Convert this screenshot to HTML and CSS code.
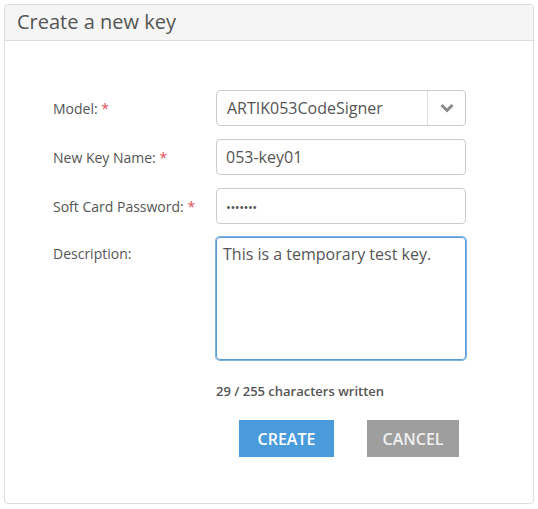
FILE: index.html
```html
<!DOCTYPE html>
<html>
<head>
<meta charset="utf-8">
<link rel="stylesheet" href="styles.css">
</head>
<body>
<div class="panel">
  <div class="panel-head">Create a new key</div>
  <div class="panel-body">
    <div class="form">
      <label class="lbl">Model: <span class="req">*</span></label>
      <div class="select">
        <span class="select-val">ARTIK053CodeSigner</span>
        <span class="select-btn">
          <svg width="14" height="10" viewBox="0 0 14 10"><path d="M1.5 2 L7 7.5 L12.5 2" fill="none" stroke="#8a8a8a" stroke-width="3"/></svg>
        </span>
      </div>
      <label class="lbl">New Key Name: <span class="req">*</span></label>
      <div class="field">053-key01</div>
      <label class="lbl">Soft Card Password: <span class="req">*</span></label>
      <div class="field dots">•••••••</div>
      <label class="lbl lbl-top">Description:</label>
      <div class="field area">This is a temporary test key.</div>
      <span></span>
      <div class="count">29 / 255 characters written</div>
      <span></span>
      <div class="actions">
        <button class="btn btn-create">CREATE</button>
        <button class="btn btn-cancel">CANCEL</button>
      </div>
    </div>
  </div>
</div>
</body>
</html>
```
FILE: styles.css
```css
* { box-sizing: border-box; }
html, body { margin: 0; padding: 0; background: #fff; }
body { font-family: "Open Sans", "Noto Sans", sans-serif; color: #555; }
.panel {
  margin: 4px;
  width: 530px;
  height: 500px;
  border: 1px solid #dcdcdc;
  border-radius: 4px;
  overflow: hidden;
}
.panel-head {
  height: 36px;
  background: #f5f5f5;
  border-bottom: 1px solid #dcdcdc;
  font-size: 20px;
  line-height: 34px;
  padding-left: 12px;
  color: #555;
}
.panel-body { padding: 49px 0 0 48px; }
.form {
  display: grid;
  grid-template-columns: 163px 250px;
  row-gap: 13px;
  align-items: center;
}
.lbl { font-size: 14px; color: #555; }
.lbl-top { align-self: start; padding-top: 7px; }
.req { color: #e0525a; }
.select {
  height: 36px;
  border: 1px solid #ccc;
  border-radius: 4px;
  display: flex;
  align-items: center;
}
.select-val { flex: 1; padding-left: 10px; font-size: 16px; color: #555; }
.select-btn {
  width: 38px;
  height: 100%;
  border-left: 1px solid #ddd;
  display: flex;
  align-items: center;
  justify-content: center;
}
.field {
  height: 36px;
  width: 250px;
  border: 1px solid #ccc;
  border-radius: 4px;
  padding: 0 9px;
  font-size: 16px;
  color: #555;
  display: flex;
  align-items: center;
}
.dots { font-size: 13px; letter-spacing: -0.5px; padding-top: 1px; }
.area {
  height: 123px;
  align-items: flex-start;
  padding-top: 5px;
  padding-left: 6px;
  border: 1px solid #5a9ad6;
  box-shadow: 0 0 0 1px #7fb1e3;
}
.count {
  font-size: 13px;
  font-weight: 600;
  color: #555;
  margin-top: 9px;
}
.actions {
  display: flex;
  gap: 33px;
  padding-left: 23px;
  margin-top: 7px;
}
.btn {
  height: 37px;
  border: none;
  border-radius: 0;
  font-family: inherit;
  font-size: 16px;
  font-weight: 600;
  padding: 0;
}
.btn-create { width: 95px; background: #4a9bdc; color: #fff; }
.btn-cancel { width: 92px; background: #9e9e9e; color: #f0f0f0; }
```
